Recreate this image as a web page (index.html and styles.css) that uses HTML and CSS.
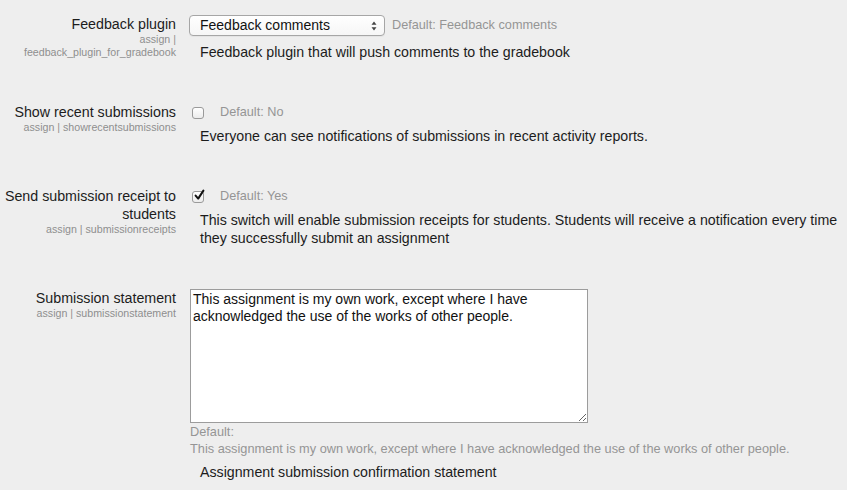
FILE: index.html
```html
<!DOCTYPE html>
<html>
<head>
<meta charset="utf-8">
<link rel="stylesheet" href="styles.css">
</head>
<body>
<div class="page">
  <div class="setting">
    <div class="label">
      <span class="title">Feedback plugin</span>
      <span class="key">assign | feedback_plugin_for_gradebook</span>
    </div>
    <div class="content">
      <div class="control">
        <div class="select-wrap">
          <select class="select"><option>Feedback comments</option></select>
          <svg class="arrows" width="6" height="10" viewBox="0 0 6 10"><path d="M3 0.5 L5.5 3.8 L0.5 3.8 Z M3 9.5 L5.5 6.2 L0.5 6.2 Z" fill="#444"/></svg>
        </div>
        <span class="default">Default: Feedback comments</span>
      </div>
      <div class="desc">Feedback plugin that will push comments to the gradebook</div>
    </div>
  </div>

  <div class="setting">
    <div class="label">
      <span class="title">Show recent submissions</span>
      <span class="key">assign | showrecentsubmissions</span>
    </div>
    <div class="content">
      <div class="control check-line">
        <span class="checkbox"></span>
        <span class="default">Default: No</span>
      </div>
      <div class="desc">Everyone can see notifications of submissions in recent activity reports.</div>
    </div>
  </div>

  <div class="setting">
    <div class="label">
      <span class="title">Send submission receipt to students</span>
      <span class="key">assign | submissionreceipts</span>
    </div>
    <div class="content">
      <div class="control check-line">
        <span class="checkbox"><svg class="tick" width="13" height="13" viewBox="0 0 13 13"><path d="M2.6 6.6 L5.2 9.6 L10.4 1.6" fill="none" stroke="#111" stroke-width="2" stroke-linecap="round" stroke-linejoin="round"/></svg></span>
        <span class="default">Default: Yes</span>
      </div>
      <div class="desc">This switch will enable submission receipts for students. Students will receive a notification every time they successfully submit an assignment</div>
    </div>
  </div>

  <div class="setting">
    <div class="label">
      <span class="title">Submission statement</span>
      <span class="key">assign | submissionstatement</span>
    </div>
    <div class="content">
      <textarea class="textarea">This assignment is my own work, except where I have acknowledged the use of the works of other people.</textarea>
      <div class="default-block">
        <div>Default:</div>
        <div>This assignment is my own work, except where I have acknowledged the use of the works of other people.</div>
      </div>
      <div class="desc">Assignment submission confirmation statement</div>
    </div>
  </div>
</div>
</body>
</html>
```
FILE: styles.css
```css
html, body {
  margin: 0;
  padding: 0;
  background: #eeeeee;
}
body {
  font-family: "Liberation Sans", Arial, Helvetica, sans-serif;
  color: #1c1c1c;
  font-size: 14px;
}
.page {
  display: flex;
  flex-direction: column;
  gap: 42px;
  padding: 15px 8px 0 0;
}
.setting {
  display: grid;
  grid-template-columns: 176px 1fr;
  column-gap: 14px;
}
.label {
  display: flex;
  flex-direction: column;
  align-items: flex-end;
  text-align: right;
}
.title {
  font-size: 14.25px;
  line-height: 18px;
}
.key {
  font-size: 10.65px;
  line-height: 13px;
  color: #8e8e8e;
}
.content {
  display: flex;
  flex-direction: column;
  align-items: flex-start;
}
.control {
  display: flex;
  align-items: center;
  height: 20px;
}
.check-line {
  height: 18px;
}
.select-wrap {
  position: relative;
  width: 196px;
  height: 21px;
  margin-left: -1px;
}
.select {
  -webkit-appearance: none;
  appearance: none;
  width: 196px;
  height: 21px;
  box-sizing: border-box;
  border: 1px solid #a6a6a6;
  border-radius: 4px;
  background: linear-gradient(#ffffff, #f6f6f6);
  font-family: "Liberation Sans", Arial, sans-serif;
  font-size: 14px;
  color: #111;
  padding: 0 0 0 10px;
  margin: 0;
  box-shadow: 0 1px 0 rgba(0,0,0,0.04);
}
.arrows {
  position: absolute;
  right: 8px;
  top: 6px;
}
.default {
  font-size: 12.7px;
  color: #959595;
  margin-left: 7px;
}
.check-line .default {
  margin-left: 16px;
}
.checkbox {
  position: relative;
  width: 12px;
  height: 12px;
  box-sizing: border-box;
  border: 1px solid #9a9a9a;
  border-radius: 3px;
  background: linear-gradient(#ffffff, #ececec);
  margin-left: 2px;
  margin-top: 1px;
}
.tick {
  position: absolute;
  left: 0px;
  top: -3px;
}
.desc {
  font-size: 14.2px;
  line-height: 18px;
  padding-left: 10px;
  margin-top: 6px;
}
.setting:first-child .desc {
  margin-top: 8px;
}
.textarea {
  width: 398px;
  height: 134px;
  box-sizing: border-box;
  border: 1px solid #9c9c9c;
  background: #ffffff;
  font-family: "Liberation Sans", Arial, sans-serif;
  font-size: 14px;
  line-height: 17px;
  color: #111;
  padding: 1px 2px;
  margin: 0;
  display: block;
  resize: both;
}
.default-block {
  font-size: 12.75px;
  line-height: 17px;
  color: #959595;
}
```
